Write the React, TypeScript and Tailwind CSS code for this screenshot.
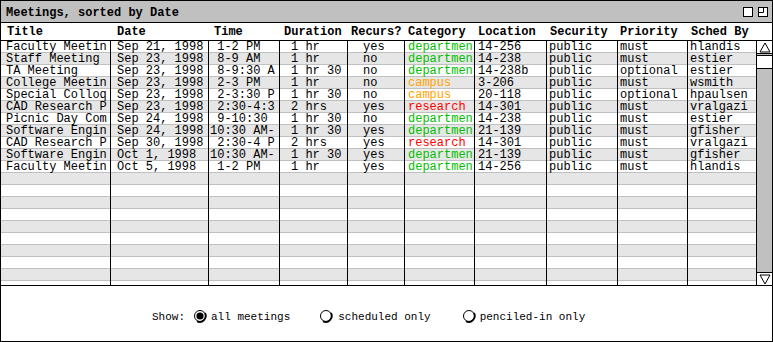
import React from "react";

const cols = [
  { w: 110, hp: 6, dp: 5 },
  { w: 98, hp: 6, dp: 6 },
  { w: 71, hp: 5, dp: 1 },
  { w: 68, hp: 4, dp: 11 },
  { w: 57, hp: 3, dp: 15 },
  { w: 70, hp: 3, dp: 3 },
  { w: 72, hp: 3, dp: 3 },
  { w: 71, hp: 3, dp: 2 },
  { w: 70, hp: 2, dp: 2 },
  { w: 68, hp: 3, dp: 2 },
];

const headers = ["Title", "Date", "Time", "Duration", "Recurs?", "Category", "Location", "Security", "Priority", "Sched By"];

const data: string[][] = [
  ["Faculty Meetin", "Sep 21, 1998", " 1-2 PM", "1 hr", "yes", "departmen", "14-256", "public", "must", "hlandis"],
  ["Staff Meeting", "Sep 23, 1998", " 8-9 AM", "1 hr", "no", "departmen", "14-238", "public", "must", "estier"],
  ["TA Meeting", "Sep 23, 1998", " 8-9:30 A", "1 hr 30", "no", "departmen", "14-238b", "public", "optional", "estier"],
  ["College Meetin", "Sep 23, 1998", " 2-3 PM", "1 hr", "no", "campus", "3-206", "public", "must", "wsmith"],
  ["Special Colloq", "Sep 23, 1998", " 2-3:30 P", "1 hr 30", "no", "campus", "20-118", "public", "optional", "hpaulsen"],
  ["CAD Research P", "Sep 23, 1998", " 2:30-4:3", "2 hrs", "yes", "research", "14-301", "public", "must", "vralgazi"],
  ["Picnic Day Com", "Sep 24, 1998", " 9-10:30", "1 hr 30", "no", "departmen", "14-238", "public", "must", "estier"],
  ["Software Engin", "Sep 24, 1998", "10:30 AM-", "1 hr 30", "yes", "departmen", "21-139", "public", "must", "gfisher"],
  ["CAD Research P", "Sep 30, 1998", " 2:30-4 P", "2 hrs", "yes", "research", "14-301", "public", "must", "vralgazi"],
  ["Software Engin", "Oct 1, 1998", "10:30 AM-", "1 hr 30", "yes", "departmen", "21-139", "public", "must", "gfisher"],
  ["Faculty Meetin", "Oct 5, 1998", " 1-2 PM", "1 hr", "yes", "departmen", "14-256", "public", "must", "hlandis"],
];

const catColor: Record<string, string> = {
  departmen: "text-[#00c000]",
  campus: "text-[#ffa500]",
  research: "text-[#ff0000]",
};

const mono = { fontFamily: '"Liberation Mono", "Courier New", monospace' };

function Radio({ on }: { on?: boolean }) {
  return (
    <svg width="15" height="15" viewBox="0 0 15 15" className="shrink-0">
      <circle cx="7" cy="7" r="5.5" fill="white" stroke="black" strokeWidth="1" />
      <path d="M12 4 A6 6 0 0 1 4 12.2" fill="none" stroke="black" strokeWidth="1.8" />
      {on && <circle cx="7" cy="7" r="3.6" fill="black" />}
    </svg>
  );
}

export default function App() {
  const totalRows = 21;
  return (
    <div className="w-[773px] h-[342px] bg-white overflow-hidden" style={mono}>
      <div className="w-[773px] h-[342px] border border-black flex flex-col">
        {/* Title bar */}
        <div className="h-[22px] bg-[#c0c0c0] border-b border-black flex items-center pl-[5px] pr-[4px] shrink-0">
          <span className="text-[12px] font-bold leading-[12px] text-black pt-[2px] whitespace-pre">Meetings, sorted by Date</span>
          <div className="flex-1" />
          <div className="flex items-center gap-[5px]">
            <svg width="10" height="10" viewBox="0 0 10 10">
              <rect x="0.5" y="0.5" width="9" height="9" fill="white" stroke="black" />
            </svg>
            <svg width="10" height="10" viewBox="0 0 10 10">
              <rect x="0.5" y="0.5" width="9" height="9" fill="white" stroke="black" />
              <path d="M5.5 0.5 V5.5 H0.5" fill="none" stroke="black" />
            </svg>
          </div>
        </div>
        {/* Header row */}
        <div className="h-[18px] border-b border-black flex shrink-0">
          {headers.map((h, i) => (
            <div
              key={h}
              className="h-full flex items-center text-[12px] font-bold leading-[12px] whitespace-pre overflow-hidden"
              style={{ width: cols[i].w, paddingLeft: cols[i].hp }}
            >
              {h}
            </div>
          ))}
        </div>
        {/* Body */}
        <div className="flex h-[245px] border-b border-black shrink-0 overflow-hidden">
          <div className="flex flex-col w-[755px] overflow-hidden">
            {Array.from({ length: totalRows }).map((_, r) => {
              const row = data[r];
              return (
                <div
                  key={r}
                  className={`flex h-[12px] shrink-0 border-b border-[#c0c0c0] ${r % 2 === 1 ? "bg-[#e6e6e6]" : "bg-white"}`}
                >
                  {cols.map((c, i) => {
                    const v = row ? row[i] : "";
                    const color = i === 5 && row ? catColor[v] : "text-black";
                    return (
                      <div
                        key={i}
                        className={`h-[12px] overflow-hidden whitespace-pre text-[12px] leading-[12px] ${color} ${i < 9 ? "border-r border-black" : ""}`}
                        style={{ width: c.w, paddingLeft: c.dp }}
                      >
                        {v}
                      </div>
                    );
                  })}
                </div>
              );
            })}
          </div>
          {/* Scrollbar */}
          <div className="w-[16px] border-l border-black bg-[#c0c0c0] flex flex-col">
            <div className="h-[13px] bg-white border-b border-black flex items-center justify-center">
              <svg width="12" height="11" viewBox="0 0 12 11">
                <path d="M6 1 L11 10 H1 Z" fill="white" stroke="black" strokeWidth="1" />
              </svg>
            </div>
            <div className="h-[14px] mt-[1px] bg-white border-y border-black" />
            <div className="flex-1" />
            <div className="h-[13px] bg-white border-t border-black flex items-center justify-center">
              <svg width="12" height="11" viewBox="0 0 12 11">
                <path d="M1 1 H11 L6 10 Z" fill="white" stroke="black" strokeWidth="1" />
              </svg>
            </div>
          </div>
        </div>
        {/* Bottom panel */}
        <div className="flex-1 flex items-center pl-[151px] pt-[6px] text-[11px] leading-[12px] text-black">
          <span className="whitespace-pre">Show:</span>
          <div className="ml-[8px] flex items-center">
            <Radio on />
            <span className="ml-[3px] whitespace-pre">all meetings</span>
          </div>
          <div className="ml-[29px] flex items-center">
            <Radio />
            <span className="ml-[4px] whitespace-pre">scheduled only</span>
          </div>
          <div className="ml-[31px] flex items-center">
            <Radio />
            <span className="ml-[3px] whitespace-pre">penciled-in only</span>
          </div>
        </div>
      </div>
    </div>
  );
}
